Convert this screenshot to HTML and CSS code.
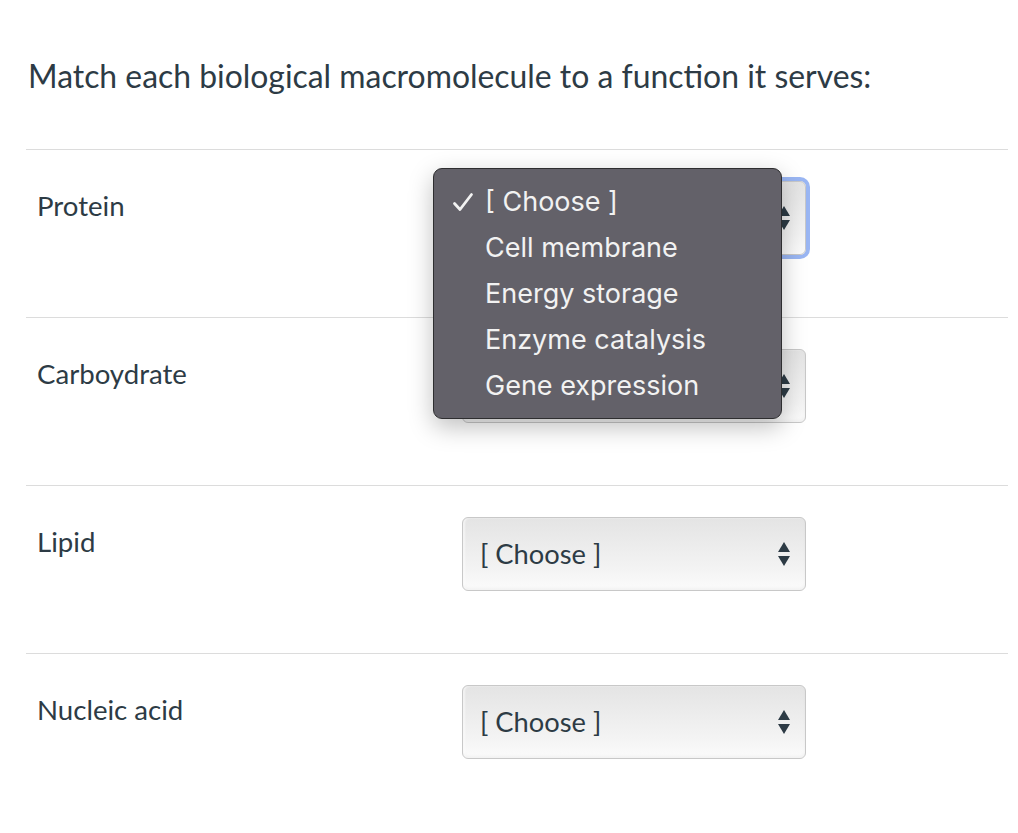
FILE: index.html
```html
<!DOCTYPE html>
<html>
<head>
<meta charset="utf-8">
<link rel="stylesheet" href="styles.css">
</head>
<body>
<div class="page">
  <h1 class="question">Match each biological macromolecule to a function it serves:</h1>
  <div class="rows">
    <div class="row">
      <div class="label">Protein</div>
      <div class="select focused"><span class="value">[ Choose ]</span><span class="arrows"></span></div>
    </div>
    <div class="row">
      <div class="label">Carboydrate</div>
      <div class="select"><span class="value">[ Choose ]</span><span class="arrows"></span></div>
    </div>
    <div class="row">
      <div class="label">Lipid</div>
      <div class="select"><span class="value">[ Choose ]</span><span class="arrows"></span></div>
    </div>
    <div class="row">
      <div class="label">Nucleic acid</div>
      <div class="select"><span class="value">[ Choose ]</span><span class="arrows"></span></div>
    </div>
  </div>
  <div class="menu">
    <div class="item checked"><svg class="check" width="22" height="20" viewBox="0 0 22 20"><path d="M2.5 11.5 L8 17.5 L19.5 2.5" fill="none" stroke="#f2f2f2" stroke-width="2.8" stroke-linecap="round" stroke-linejoin="round"/></svg>[ Choose ]</div>
    <div class="item">Cell membrane</div>
    <div class="item">Energy storage</div>
    <div class="item">Enzyme catalysis</div>
    <div class="item">Gene expression</div>
  </div>
</div>
</body>
</html>
```
FILE: styles.css
```css
html, body {
  margin: 0;
  padding: 0;
  background: #ffffff;
}
.page {
  position: relative;
  width: 1018px;
  height: 833px;
  font-family: Lato, "Noto Sans", sans-serif;
  color: #2d3b45;
}
.question {
  margin: 0;
  padding: 56px 0 0 28px;
  font-size: 31.9px;
  font-weight: 400;
  line-height: 40px;
  height: 93px;
}
.rows {
  margin-left: 26px;
  width: 982px;
}
.row {
  height: 167px;
  border-top: 1px solid #dcdcdc;
  display: flex;
  align-items: flex-start;
}
.row:last-child {
  height: 60px;
}
.label {
  width: 425px;
  padding-left: 11px;
  padding-top: 39px;
  font-size: 27.6px;
  line-height: 34px;
}
.select {
  margin-top: 31px;
  width: 342px;
  height: 72px;
  box-sizing: content-box;
  border: 1px solid #c8c8c8;
  border-radius: 6px;
  background: linear-gradient(#e4e4e4, #f3f3f3 70%, #fbfbfb);
  box-shadow: inset 0 -2px 3px rgba(0,0,0,0.04), inset 2px 0 2px rgba(255,255,255,0.6);
  display: flex;
  align-items: center;
  position: relative;
}
.select.focused {
  box-shadow: 0 0 0 4px #9ab6f3;
}
.value {
  padding-left: 17px;
  font-size: 27.3px;
  padding-bottom: 1px;
}
.arrows {
  position: absolute;
  right: 15px;
  top: 50%;
  width: 12px;
  height: 24px;
  margin-top: -12px;
}
.arrows::before, .arrows::after {
  content: "";
  position: absolute;
  left: 0;
  border-left: 6px solid transparent;
  border-right: 6px solid transparent;
}
.arrows::before {
  top: 0;
  border-bottom: 10px solid #2d3b45;
}
.arrows::after {
  bottom: 0;
  border-top: 10px solid #2d3b45;
}
.menu {
  position: absolute;
  left: 433px;
  top: 168px;
  width: 347px;
  background: #636169;
  border: 1px solid #2e2e30;
  border-radius: 9px;
  box-shadow: 0 8px 24px rgba(0,0,0,0.25);
  padding: 11px 0 8px;
  font-family: Inter, "Noto Sans", sans-serif;
}
.item {
  position: relative;
  height: 46px;
  line-height: 44px;
  padding-left: 51px;
  color: #f2f2f2;
  font-size: 27px;
}
.check {
  position: absolute;
  left: 18px;
  top: 12px;
}
```
